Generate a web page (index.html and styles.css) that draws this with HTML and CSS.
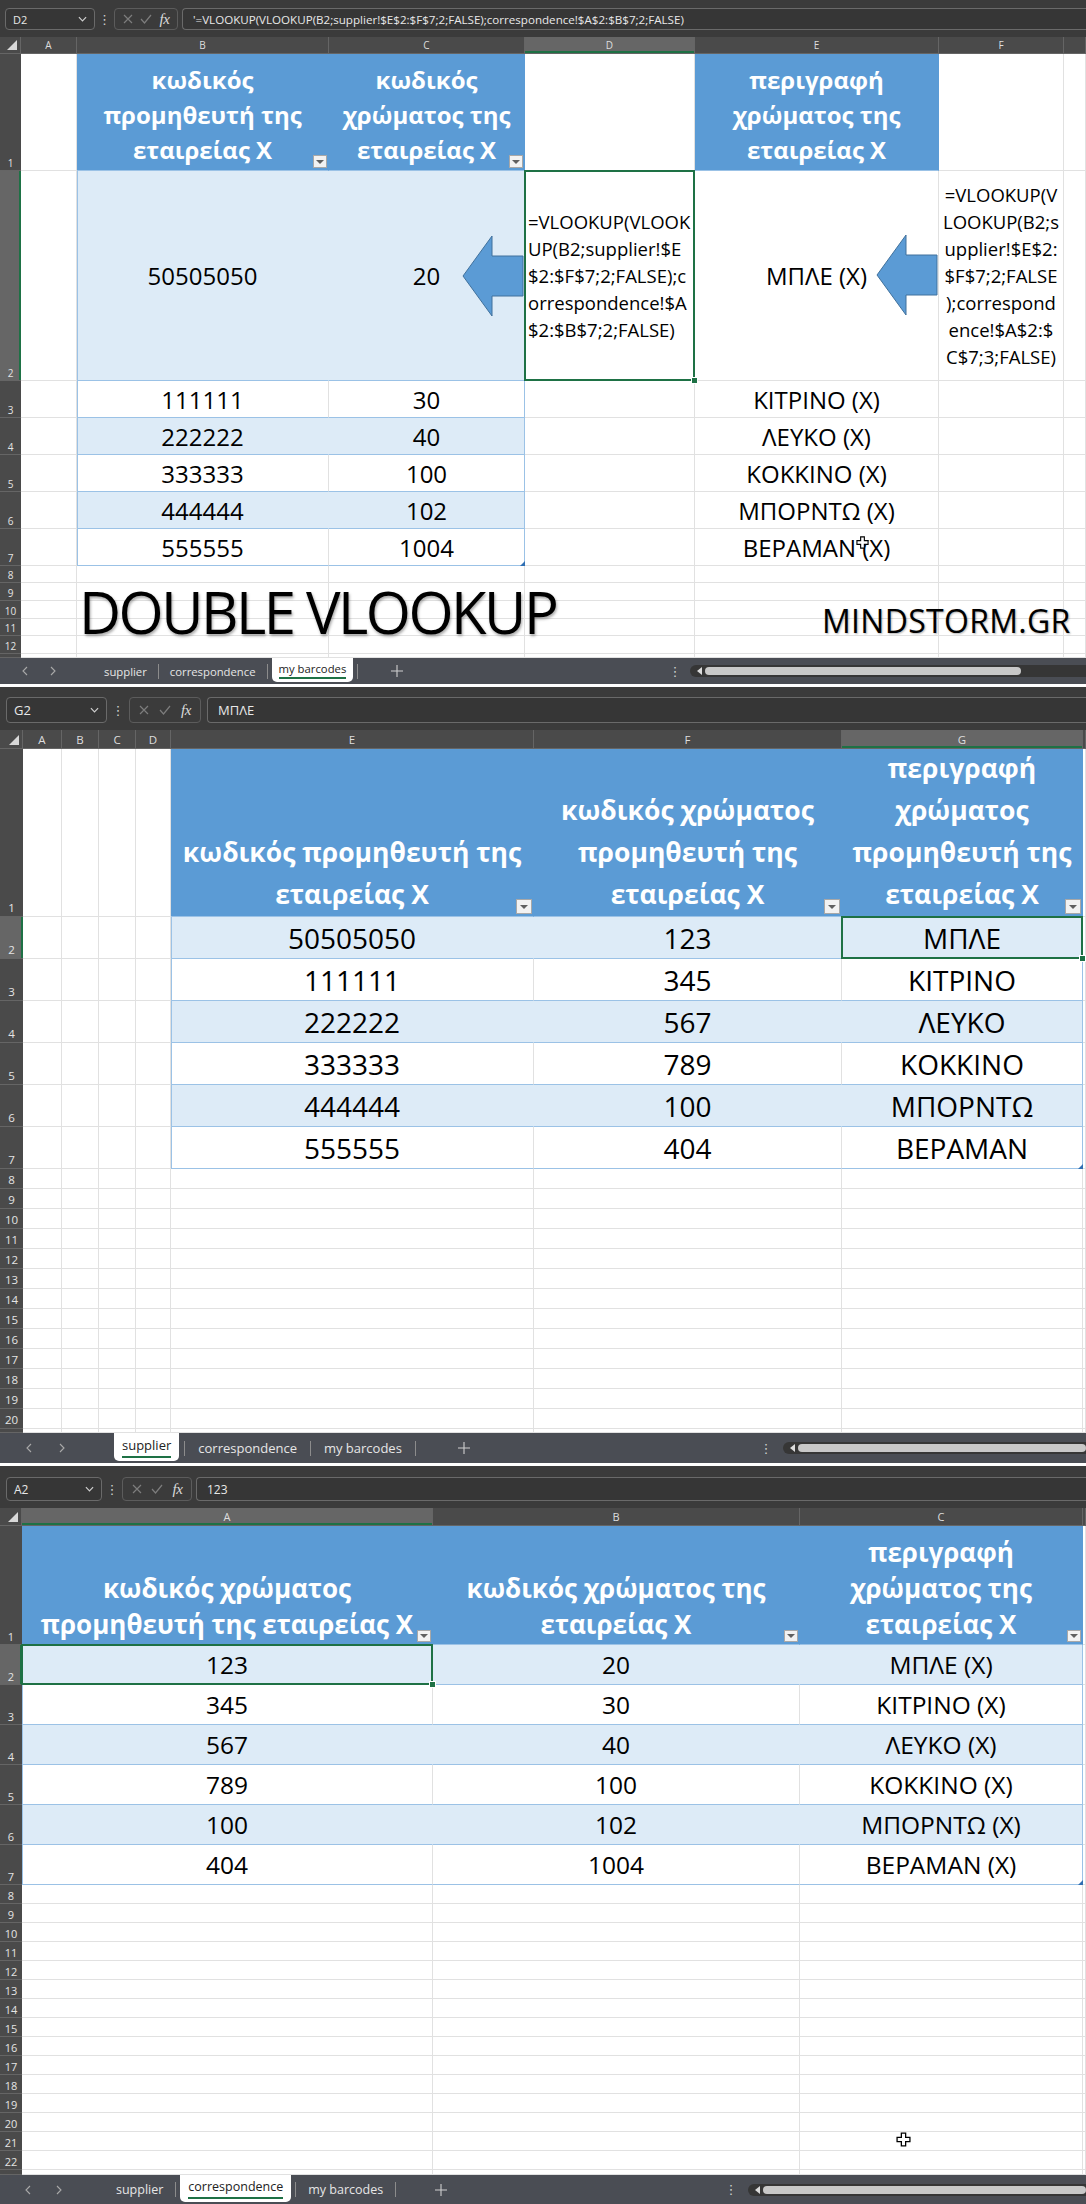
FILE: index.html
```html
<!DOCTYPE html>
<html lang="el">
<head>
    <meta charset="UTF-8">
    <meta name="viewport" content="width=device-width, initial-scale=1.0">
    <title>Double VLOOKUP</title>
    <link rel="stylesheet" href="styles.css">
</head>
<body>
    <!-- sheet: my barcodes -->
    <div class="window sheet-barcodes">
        <div class="formula-bar">
            <div class="name-box">D2<svg class="chev" viewBox="0 0 10 6"><path d="M1 1l4 4 4-4"/></svg></div>
            <div class="dots">⋮</div>
            <div class="fx-box">
                <svg class="btn-x" viewBox="0 0 10 10"><path d="M1 1l8 8M9 1l-8 8"/></svg>
                <svg class="btn-ok" viewBox="0 0 12 10"><path d="M1 5l3.5 4L11 1"/></svg>
                <i class="fx">fx</i>
            </div>
            <div class="formula-input">'=VLOOKUP(VLOOKUP(B2;supplier!$E$2:$F$7;2;FALSE);correspondence!$A$2:$B$7;2;FALSE)</div>
        </div>
        <div class="grid" id="grid-barcodes">
            <svg class="arrow arrow-c" data-cell="C2" viewBox="0 0 62 82"><path d="M1 41L30 1V21H61V61H30V81Z"/></svg>
            <svg class="arrow arrow-e" data-cell="E2" viewBox="0 0 62 82"><path d="M1 41L30 1V21H61V61H30V81Z"/></svg>
            <svg class="cursor cursor-1" data-cell="E7" viewBox="0 0 14 14"><path d="M5 1h4v4h4v4H9v4H5V9H1V5h4z"/></svg>
            <div class="banner" data-cell="B11">DOUBLE VLOOKUP</div>
            <div class="brand" data-cell="E11">MINDSTORM.GR</div>
        </div>
        <div class="tab-bar">
            <div class="tab-nav">
                <svg viewBox="0 0 6 10"><path d="M5 1L1 5l4 4"/></svg>
                <svg viewBox="0 0 6 10"><path d="M1 1l4 4-4 4"/></svg>
            </div>
            <div class="tab"><span>supplier</span></div><i class="sep"></i>
            <div class="tab"><span>correspondence</span></div><i class="sep"></i>
            <div class="tab on"><span>my barcodes</span></div><i class="sep"></i>
            <svg class="add" viewBox="0 0 12 12"><path d="M6 0v12M0 6h12"/></svg>
            <div class="dots">⋮</div>
            <div class="hscroll"><i class="left"></i><i class="thumb"></i></div>
        </div>
    </div>

    <!-- sheet: supplier -->
    <div class="window sheet-supplier">
        <div class="formula-bar">
            <div class="name-box">G2<svg class="chev" viewBox="0 0 10 6"><path d="M1 1l4 4 4-4"/></svg></div>
            <div class="dots">⋮</div>
            <div class="fx-box">
                <svg class="btn-x" viewBox="0 0 10 10"><path d="M1 1l8 8M9 1l-8 8"/></svg>
                <svg class="btn-ok" viewBox="0 0 12 10"><path d="M1 5l3.5 4L11 1"/></svg>
                <i class="fx">fx</i>
            </div>
            <div class="formula-input">ΜΠΛΕ</div>
        </div>
        <div class="grid" id="grid-supplier"></div>
        <div class="tab-bar">
            <div class="tab-nav">
                <svg viewBox="0 0 6 10"><path d="M5 1L1 5l4 4"/></svg>
                <svg viewBox="0 0 6 10"><path d="M1 1l4 4-4 4"/></svg>
            </div>
            <div class="tab on"><span>supplier</span></div><i class="sep"></i>
            <div class="tab"><span>correspondence</span></div><i class="sep"></i>
            <div class="tab"><span>my barcodes</span></div><i class="sep"></i>
            <svg class="add" viewBox="0 0 12 12"><path d="M6 0v12M0 6h12"/></svg>
            <div class="dots">⋮</div>
            <div class="hscroll"><i class="left"></i><i class="thumb"></i></div>
        </div>
    </div>

    <!-- sheet: correspondence -->
    <div class="window sheet-corr">
        <div class="formula-bar">
            <div class="name-box">A2<svg class="chev" viewBox="0 0 10 6"><path d="M1 1l4 4 4-4"/></svg></div>
            <div class="dots">⋮</div>
            <div class="fx-box">
                <svg class="btn-x" viewBox="0 0 10 10"><path d="M1 1l8 8M9 1l-8 8"/></svg>
                <svg class="btn-ok" viewBox="0 0 12 10"><path d="M1 5l3.5 4L11 1"/></svg>
                <i class="fx">fx</i>
            </div>
            <div class="formula-input">123</div>
        </div>
        <div class="grid" id="grid-corr">
            <svg class="cursor cursor-3" data-cell="C21" viewBox="0 0 14 14"><path d="M5 1h4v4h4v4H9v4H5V9H1V5h4z"/></svg>
        </div>
        <div class="tab-bar">
            <div class="tab-nav">
                <svg viewBox="0 0 6 10"><path d="M5 1L1 5l4 4"/></svg>
                <svg viewBox="0 0 6 10"><path d="M1 1l4 4-4 4"/></svg>
            </div>
            <div class="tab"><span>supplier</span></div><i class="sep"></i>
            <div class="tab on"><span>correspondence</span></div><i class="sep"></i>
            <div class="tab"><span>my barcodes</span></div><i class="sep"></i>
            <svg class="add" viewBox="0 0 12 12"><path d="M6 0v12M0 6h12"/></svg>
            <div class="dots">⋮</div>
            <div class="hscroll"><i class="left"></i><i class="thumb"></i></div>
        </div>
    </div>

    <script>
        const HEAD_SUP = 'κωδικός<br>προμηθευτή της<br>εταιρείας Χ';

        const SHEETS = [
            {
                id: 'grid-barcodes',
                cols: ['A', 'B', 'C', 'D', 'E', 'F', ''],
                rows: 13, labelled: 12,
                active: ['D', 2],
                table: { cols: ['B', 'C'], top: 1, bottom: 7 },
                cells: {
                    B1: HEAD_SUP,
                    C1: 'κωδικός<br>χρώματος της<br>εταιρείας Χ',
                    E1: { html: 'περιγραφή<br>χρώματος της<br>εταιρείας Χ', cls: 'th' },
                    D2: { html: '=VLOOKUP(VLOOK<br>UP(B2;supplier!$E<br>$2:$F$7;2;FALSE);c<br>orrespondence!$A<br>$2:$B$7;2;FALSE)', cls: 'note' },
                    F2: { html: '=VLOOKUP(V<br>LOOKUP(B2;s<br>upplier!$E$2:<br>$F$7;2;FALSE<br>);correspond<br>ence!$A$2:$<br>C$7;3;FALSE)', cls: 'note mid' }
                },
                data: {
                    B: ['50505050', '111111', '222222', '333333', '444444', '555555'],
                    C: ['20', '30', '40', '100', '102', '1004'],
                    E: ['ΜΠΛΕ (Χ)', 'ΚΙΤΡΙΝΟ (Χ)', 'ΛΕΥΚΟ (Χ)', 'ΚΟΚΚΙΝΟ (Χ)', 'ΜΠΟΡΝΤΩ (Χ)', 'ΒΕΡΑΜΑΝ (Χ)']
                }
            },
            {
                id: 'grid-supplier',
                cols: ['A', 'B', 'C', 'D', 'E', 'F', 'G', ''],
                rows: 21, labelled: 20,
                active: ['G', 2],
                table: { cols: ['E', 'F', 'G'], top: 1, bottom: 7 },
                cells: {
                    E1: 'κωδικός προμηθευτή της<br>εταιρείας Χ',
                    F1: 'κωδικός χρώματος<br>προμηθευτή της<br>εταιρείας Χ',
                    G1: 'περιγραφή<br>χρώματος<br>προμηθευτή της<br>εταιρείας Χ'
                },
                data: {
                    E: ['50505050', '111111', '222222', '333333', '444444', '555555'],
                    F: ['123', '345', '567', '789', '100', '404'],
                    G: ['ΜΠΛΕ', 'ΚΙΤΡΙΝΟ', 'ΛΕΥΚΟ', 'ΚΟΚΚΙΝΟ', 'ΜΠΟΡΝΤΩ', 'ΒΕΡΑΜΑΝ']
                }
            },
            {
                id: 'grid-corr',
                cols: ['A', 'B', 'C', ''],
                rows: 23, labelled: 22,
                active: ['A', 2],
                table: { cols: ['A', 'B', 'C'], top: 1, bottom: 7 },
                cells: {
                    A1: 'κωδικός χρώματος<br>προμηθευτή της εταιρείας Χ',
                    B1: 'κωδικός χρώματος της<br>εταιρείας Χ',
                    C1: 'περιγραφή<br>χρώματος της<br>εταιρείας Χ'
                },
                data: {
                    A: ['123', '345', '567', '789', '100', '404'],
                    B: ['20', '30', '40', '100', '102', '1004'],
                    C: ['ΜΠΛΕ (Χ)', 'ΚΙΤΡΙΝΟ (Χ)', 'ΛΕΥΚΟ (Χ)', 'ΚΟΚΚΙΝΟ (Χ)', 'ΜΠΟΡΝΤΩ (Χ)', 'ΒΕΡΑΜΑΝ (Χ)']
                }
            }
        ];

        function el(parent, cls) {
            const d = document.createElement('div');
            d.className = cls;
            parent.appendChild(d);
            return d;
        }

        function buildSheet(cfg) {
            const grid = document.getElementById(cfg.id);
            const extras = {};
            grid.querySelectorAll('[data-cell]').forEach(x => { extras[x.dataset.cell] = x; });

            for (const col in cfg.data) {
                cfg.data[col].forEach((v, i) => { cfg.cells[col + (i + 2)] = v; });
            }

            const frag = document.createDocumentFragment();
            el(frag, 'corner');
            cfg.cols.forEach(c => {
                el(frag, 'col-head' + (c && c === cfg.active[0] ? ' on' : '')).textContent = c;
            });

            const t = cfg.table;
            for (let r = 1; r <= cfg.rows; r++) {
                const rh = el(frag, 'row-head' + (r === cfg.active[1] ? ' on' : ''));
                if (r <= cfg.labelled) rh.textContent = r;

                cfg.cols.forEach(c => {
                    const key = c + r;
                    const cls = ['cell'];
                    const ti = c ? t.cols.indexOf(c) : -1;
                    const inTable = ti >= 0 && r >= t.top && r <= t.bottom;
                    if (inTable) {
                        cls.push('tbl');
                        if (r === t.top) cls.push('th');
                        else if ((r - t.top) % 2) cls.push('band');
                        if (ti === 0) cls.push('tbl-first');
                        if (ti === t.cols.length - 1) cls.push('tbl-last');
                        if (r === t.bottom) cls.push('tbl-bottom');
                    }
                    const spec = c ? cfg.cells[key] : null;
                    if (spec && spec.cls) cls.push(spec.cls);
                    if (c && c === cfg.active[0] && r === cfg.active[1]) cls.push('active');

                    const cell = el(frag, cls.join(' '));
                    if (spec) {
                        const txt = document.createElement('span');
                        txt.className = 'txt';
                        txt.innerHTML = typeof spec === 'string' ? spec : spec.html;
                        cell.appendChild(txt);
                    }
                    if (inTable && r === t.top) el(cell, 'dd');
                    if (cls.includes('active')) el(cell, 'grip');
                    if (c && extras[key]) cell.appendChild(extras[key]);
                });
            }
            grid.appendChild(frag);
        }

        SHEETS.forEach(buildSheet);
    </script>
</body>
</html>
```

FILE: styles.css
```css
* {
    box-sizing: border-box;
}
body {
    margin: 0;
    width: 1086px;
    background: #fff;
    font-family: "Open Sans", "Noto Sans", sans-serif;
    color: #000;
}

/* ---------- window shell ---------- */
.window {
    display: flex;
    flex-direction: column;
    background: #3b3b3b;
    color: #e8e8e8;
}
.window + .window {
    border-top: 3px solid #fff;
}

/* ---------- formula bar ---------- */
.formula-bar {
    display: flex;
    align-items: stretch;
    height: var(--fb-h);
    padding: var(--fb-top) 0 7px var(--fb-left);
    font-size: var(--fb-font);
}
.name-box {
    width: var(--nb-w);
    display: flex;
    align-items: center;
    justify-content: space-between;
    padding: 0 7px;
    border: 1px solid #6a6a6a;
    border-radius: 4px;
    background: #363636;
}
.chev {
    width: 9px;
    height: 6px;
    fill: none;
    stroke: #cfcfcf;
    stroke-width: 1.3;
}
.formula-bar .dots {
    width: var(--dots-w);
    display: flex;
    align-items: center;
    justify-content: center;
    color: #cfcfcf;
    font-family: "DejaVu Sans", sans-serif;
    font-size: 13px;
}
.fx-box {
    width: var(--fx-w);
    display: flex;
    align-items: center;
    justify-content: space-around;
    padding: 0 4px;
    border: 1px solid #5c5c5c;
    border-radius: 4px;
}
.btn-x, .btn-ok {
    width: 10px;
    height: 10px;
    fill: none;
    stroke: #7d7d7d;
    stroke-width: 1.2;
}
.btn-ok {
    width: 12px;
}
.fx {
    font-family: "Liberation Serif", serif;
    font-size: 15px;
    color: #dcdcdc;
    letter-spacing: -0.5px;
}
.formula-input {
    flex: 1;
    display: flex;
    align-items: center;
    margin-left: var(--fi-gap);
    padding-left: 10px;
    border: 1px solid #6a6a6a;
    border-right: none;
    border-radius: 4px 0 0 4px;
    background: #363636;
    white-space: nowrap;
    overflow: hidden;
    font-size: var(--fi-font);
}

/* ---------- grid ---------- */
.grid {
    display: grid;
    background: #fff;
    color: #000;
}
.corner {
    background: #4a4a4a;
    border-right: 1px solid #656565;
    border-bottom: 1px solid #656565;
    position: relative;
}
.corner::after {
    content: '';
    position: absolute;
    right: 3px;
    bottom: 3px;
    width: 10px;
    height: 10px;
    background: #d8d8d8;
    clip-path: polygon(100% 0, 100% 100%, 0 100%);
}
.col-head {
    display: flex;
    align-items: center;
    justify-content: center;
    background: #4a4a4a;
    color: #dedede;
    font-size: var(--hd-font);
    border-right: 1px solid #656565;
    border-bottom: 1px solid #656565;
    overflow: hidden;
}
.col-head.on {
    background: #666;
    box-shadow: inset 0 -2px #1e7145;
}
.row-head {
    display: flex;
    align-items: flex-end;
    justify-content: center;
    background: #4a4a4a;
    color: #e4e4e4;
    font-size: var(--hd-font);
    line-height: 1.3;
    border-bottom: 1px solid #656565;
    overflow: hidden;
}
.row-head.on {
    background: #666;
    box-shadow: inset -2px 0 #1e7145;
}

.cell {
    position: relative;
    display: flex;
    align-items: center;
    justify-content: center;
    text-align: center;
    white-space: nowrap;
    border-right: 1px solid #e1e1e1;
    border-bottom: 1px solid #e1e1e1;
    font-size: var(--data-font);
}
.tbl {
    border-bottom-color: #9bc2e6;
}
.tbl-first {
    box-shadow: inset 1px 0 #9bc2e6;
}
.tbl-last {
    border-right-color: #9bc2e6;
}
.band {
    background: #ddebf7;
    border-right-color: #ddebf7;
}
.band.tbl-last {
    border-right-color: #9bc2e6;
}
.th {
    align-items: flex-end;
    padding-bottom: var(--th-pad);
    background: #5b9bd5;
    color: #fff;
    font-weight: 700;
    font-size: var(--th-font);
    line-height: var(--th-lh);
    border-right-color: #5b9bd5;
    border-bottom-color: #9bc2e6;
    box-shadow: none;
}
.tbl-bottom.tbl-last::before {
    content: '';
    position: absolute;
    right: -1px;
    bottom: -1px;
    width: 5px;
    height: 5px;
    background: #2f6fb3;
    clip-path: polygon(100% 0, 100% 100%, 0 100%);
}
.dd {
    position: absolute;
    right: 1px;
    bottom: 2px;
    width: var(--dd-w);
    height: var(--dd-h);
    background: #f2f2f2;
    border: 1px solid #a8a8a8;
}
.dd::after {
    content: '';
    position: absolute;
    left: 50%;
    top: 50%;
    margin: -2px 0 0 -4px;
    border-left: 4px solid transparent;
    border-right: 4px solid transparent;
    border-top: 4px solid #606060;
}
.active::after {
    content: '';
    position: absolute;
    inset: -1px -1px -1px -1px;
    border: 2px solid #1e7145;
    z-index: 2;
}
.grip {
    position: absolute;
    right: -4px;
    bottom: -4px;
    width: 7px;
    height: 7px;
    background: #1e7145;
    border: 1px solid #fff;
    z-index: 3;
}

/* formula text shown in cells */
.note {
    justify-content: flex-start;
    text-align: left;
    padding-left: 3px;
    font-size: 18.5px;
    line-height: 27px;
}
.note.mid {
    justify-content: center;
    text-align: center;
    padding-left: 0;
}

/* overlays */
.arrow {
    position: absolute;
    right: 0;
    width: 62px;
    height: 82px;
    z-index: 1;
}
.arrow path {
    fill: #5b9bd5;
    stroke: #41719c;
    stroke-width: 1;
}
.arrow-c {
    top: 64px;
}
.arrow-e {
    top: 63px;
}
.cursor {
    position: absolute;
    width: 13px;
    height: 13px;
    z-index: 3;
}
.cursor path {
    fill: #fff;
    stroke: #000;
    stroke-width: 1.2;
}
.cursor-1 {
    left: 161px;
    top: 7px;
}
.cursor-3 {
    left: 96px;
    top: 0;
    width: 15px;
    height: 15px;
}
.banner, .brand {
    position: absolute;
    white-space: nowrap;
    z-index: 3;
    color: #000;
}
.banner {
    left: 2px;
    top: -36px;
    font-size: 58px;
    line-height: 58px;
    letter-spacing: -2.5px;
    text-shadow: 1px 2px 3px rgba(0, 0, 0, 0.35);
}
.brand {
    left: 127px;
    top: -14px;
    font-size: 32px;
    line-height: 32px;
    letter-spacing: 0.3px;
    text-shadow: 1px 1px 2px rgba(0, 0, 0, 0.3);
}

/* ---------- sheet tabs ---------- */
.tab-bar {
    display: flex;
    align-items: center;
    height: var(--tb-h);
    background: #4a4d54;
    font-size: var(--tab-font);
    color: #e6e6e6;
}
.tab-nav {
    width: var(--nav-w);
    height: 100%;
    display: flex;
    align-items: center;
    gap: var(--nav-gap);
    padding-left: var(--nav-pad);
}
.tab-nav svg {
    width: 6px;
    height: 10px;
    fill: none;
    stroke: #a9a9a9;
    stroke-width: 1.1;
}
.tab {
    height: 100%;
    display: flex;
    align-items: center;
    margin: 0 var(--tab-m);
}
.tab span {
    padding: 0 var(--tab-p);
    white-space: nowrap;
}
.tab.on {
    align-items: flex-start;
}
.tab.on span {
    position: relative;
    height: calc(100% - 2px);
    display: flex;
    align-items: center;
    padding-bottom: 4px;
    background: #fff;
    color: #222;
    border-radius: 0 0 5px 5px;
}
.tab.on span::after {
    content: '';
    position: absolute;
    left: var(--tab-p);
    right: var(--tab-p);
    bottom: 3px;
    height: 2px;
    background: #1e7145;
}
.sep {
    width: 1px;
    height: 15px;
    background: #8c8c8c;
}
.add {
    width: 12px;
    height: 12px;
    margin-left: var(--add-m);
    fill: none;
    stroke: #cfcfcf;
    stroke-width: 1.1;
}
.tab-bar .dots {
    margin-left: auto;
    width: var(--tdots-w);
    text-align: center;
    font-family: "DejaVu Sans", sans-serif;
    font-size: 13px;
    color: #cfcfcf;
}
.hscroll {
    width: var(--hs-w);
    height: 12px;
    display: flex;
    align-items: center;
    gap: 3px;
    padding-left: 7px;
    background: #363636;
    border-radius: 6px 0 0 6px;
    overflow: hidden;
}
.hscroll .left {
    border-top: 4px solid transparent;
    border-bottom: 4px solid transparent;
    border-right: 5px solid #dcdcdc;
}
.hscroll .thumb {
    flex: 1;
    height: 8px;
    margin-right: var(--thumb-r);
    border-radius: 4px;
    background: #c8c8c8;
}

/* ---------- per sheet sizes ---------- */
.sheet-barcodes {
    --fb-h: 37px; --fb-top: 8px; --fb-left: 5px; --fb-font: 11px; --fi-font: 11.6px;
    --nb-w: 90px; --dots-w: 19px; --fx-w: 64px; --fi-gap: 4px;
    --hd-font: 10px;
    --data-font: 24px; --th-font: 24px; --th-lh: 35px; --th-pad: 3px;
    --dd-w: 14px; --dd-h: 13px;
    --tb-h: 26px; --tab-font: 11.3px; --nav-w: 93px; --nav-gap: 22px; --nav-pad: 22px;
    --tab-m: 4px; --tab-p: 7px; --add-m: 33px;
    --tdots-w: 30px; --hs-w: 396px; --thumb-r: 65px;
}
.sheet-barcodes .grid {
    grid-template-columns: 21px 56px 252px 196px 170px 244px 125px 22px;
    grid-template-rows: 17px 117px 210px repeat(5, 37px) 17px 18px 18px 17px 18px 4px;
}

.sheet-supplier {
    --fb-h: 43px; --fb-top: 10px; --fb-left: 6px; --fb-font: 13px; --fi-font: 13px;
    --nb-w: 101px; --dots-w: 22px; --fx-w: 72px; --fi-gap: 6px;
    --hd-font: 11.5px;
    --data-font: 28px; --th-font: 26.5px; --th-lh: 42px; --th-pad: 1px;
    --dd-w: 16px; --dd-h: 15px;
    --tb-h: 30px; --tab-font: 13px; --nav-w: 109px; --nav-gap: 27px; --nav-pad: 26px;
    --tab-m: 5px; --tab-p: 8px; --add-m: 42px;
    --tdots-w: 34px; --hs-w: 303px; --thumb-r: 0px;
}
.sheet-supplier .grid {
    grid-template-columns: 23px 39px 37px 37px 35px 363px 308px 241px 3px;
    grid-template-rows: 19px 168px repeat(6, 42px) repeat(13, 20px) 4px;
}

.sheet-corr {
    --fb-h: 42px; --fb-top: 11px; --fb-left: 6px; --fb-font: 12px; --fi-font: 12px;
    --nb-w: 96px; --dots-w: 20px; --fx-w: 70px; --fi-gap: 4px;
    --hd-font: 11px;
    --data-font: 24.5px; --th-font: 26px; --th-lh: 36px; --th-pad: 2px;
    --dd-w: 14px; --dd-h: 12px;
    --tb-h: 29px; --tab-font: 12.5px; --nav-w: 104px; --nav-gap: 25px; --nav-pad: 25px;
    --tab-m: 4px; --tab-p: 8px; --add-m: 39px;
    --tdots-w: 34px; --hs-w: 338px; --thumb-r: 0px;
}
.sheet-corr .grid {
    grid-template-columns: 22px 411px 367px 283px 3px;
    grid-template-rows: 18px 119px repeat(6, 40px) repeat(15, 19px) 5px;
}
```
